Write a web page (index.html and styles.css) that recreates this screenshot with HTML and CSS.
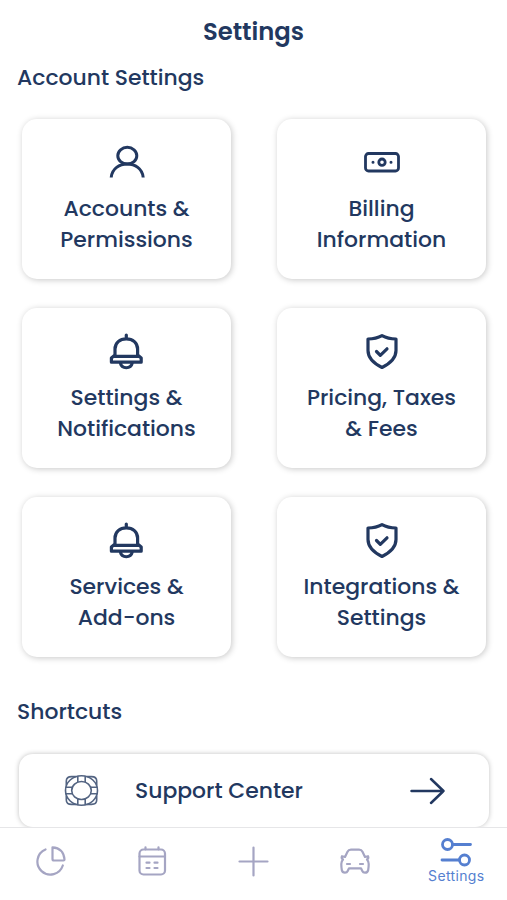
FILE: index.html
```html
<!DOCTYPE html>
<html lang="en">
<head>
<meta charset="utf-8">
<title>Settings</title>
<link rel="stylesheet" href="styles.css">
</head>
<body>
<div class="app">
  <main class="content">
    <h1 class="title">Settings</h1>
    <h2 class="heading">Account Settings</h2>
    <section class="cards">
      <a class="card">
        <svg class="icon person" viewBox="0 0 40 40"><ellipse cx="20.300" cy="13.700" rx="9.500" ry="8.400"/><path d="M4.200 35.500c1.500-18 30.500-18 32 0"/></svg>
        <span class="label">Accounts &amp;<br>Permissions</span>
      </a>
      <a class="card">
        <svg class="icon" viewBox="0 0 40 40"><rect x="3.500" y="11.500" width="33" height="17.500" rx="3"/><circle cx="20" cy="20.200" r="3.200"/><path class="dots" d="M11 20.200h.01M29 20.200h.01"/></svg>
        <span class="label">Billing<br>Information</span>
      </a>
      <a class="card">
        <svg class="icon bold" viewBox="0 0 40 40"><path d="M19.300 4v3.500M8 24v-6C8 12 12.800 7.800 19.300 7.800S30.600 12 30.600 18V24l3.600 3v4.200H4.400V27L8 24zM7.500 25.300h23.600M13.300 32c1.500 6.300 10.500 6.300 12 0"/></svg>
        <span class="label">Settings &amp;<br>Notifications</span>
      </a>
      <a class="card">
        <svg class="icon bold" viewBox="0 0 40 40"><path d="M20 4.700c4.500 2.500 9 3.300 14 3.300v11.500c0 8-6 13-14 17-8-4-14-9-14-17V8c5 0 9.500-.8 14-3.300z"/><path d="M14.500 20.500l3.800 3.800 6.700-6.500"/></svg>
        <span class="label">Pricing, Taxes<br>&amp; Fees</span>
      </a>
      <a class="card">
        <svg class="icon bold" viewBox="0 0 40 40"><path d="M19.300 4v3.500M8 24v-6C8 12 12.800 7.800 19.300 7.800S30.600 12 30.600 18V24l3.600 3v4.200H4.400V27L8 24zM7.500 25.300h23.600M13.300 32c1.500 6.300 10.500 6.300 12 0"/></svg>
        <span class="label">Services &amp;<br>Add-ons</span>
      </a>
      <a class="card">
        <svg class="icon bold" viewBox="0 0 40 40"><path d="M20 4.700c4.500 2.500 9 3.300 14 3.300v11.500c0 8-6 13-14 17-8-4-14-9-14-17V8c5 0 9.500-.8 14-3.300z"/><path d="M14.500 20.500l3.800 3.800 6.700-6.500"/></svg>
        <span class="label">Integrations &amp;<br>Settings</span>
      </a>
    </section>
    <h2 class="heading shortcuts">Shortcuts</h2>
    <a class="shortcut">
      <svg class="buoy" viewBox="0 0 36 34"><ellipse cx="17.500" cy="16.500" rx="16" ry="14.800"/><ellipse cx="17.500" cy="16.500" rx="9.800" ry="9"/><path d="M13.800 2.500v5.500M21.200 2.500v5.500M13.800 25v5.500M21.200 25v5.500M2 13.200h6.200M2 19.800h6.200M26.800 13.200h6.200M26.800 19.800h6.200M12 2.600H7.500Q2.300 2.600 2.300 7v4M23 2.600h4.500q5.200 0 5.200 4.400v4M12 30.400H7.500q-5.200 0-5.200-4.400v-4M23 30.400h4.500q5.200 0 5.200-4.400v-4"/></svg>
      <span>Support Center</span>
      <svg class="arrow" viewBox="0 0 36 28"><path d="M1.500 14h32M21 2l12.500 12L21 26"/></svg>
    </a>
  </main>
  <nav class="tabs">
    <a class="tab"><svg viewBox="0 0 32 32"><path d="M10.500 4.500A13 13 0 1 0 27.800 20.500"/><path d="M17.500 2.300Q28.500 3 29.500 14.500 29.500 15.500 28.500 15.500H19q-1.500 0-1.500-1.500z"/></svg></a>
    <a class="tab"><svg viewBox="0 0 32 32"><rect x="3.500" y="4.500" width="25.500" height="25" rx="4"/><path d="M3.500 11.500h25.500M9.500 2.300v2M22.500 2.300v2M10.500 17.700h3M18.500 17.700h3M10.500 23h3M18.500 23h3"/></svg></a>
    <a class="tab"><svg viewBox="0 0 32 32"><path d="M16.500 2.500v28M2.500 16.500h28"/></svg></a>
    <a class="tab"><svg viewBox="0 0 32 32"><path d="M6 12L8.500 6.800Q9.500 4.700 12 4.700h8q2.500 0 3.500 2.100L26 12l3-.8q1 1.800-1 3.300 1.700 2 1.700 4.500 0 3-.5 6-.5 2.700-3.200 2.700-2 0-2.700-1.700l-1.300-2.700H10l-1.300 2.700q-.7 1.700-2.700 1.700-2.700 0-3.200-2.700-.5-3-.5-6 0-2.500 1.700-4.500-2-1.500-1-3.300zM8 19h3M21 19h3"/></svg></a>
    <a class="tab active"><svg viewBox="0 0 32 32"><circle cx="7.500" cy="8.500" r="5"/><path d="M12.500 8.500h18M2 24h17.500"/><circle cx="24.500" cy="24" r="5"/></svg><span class="tab-label">Settings</span></a>
  </nav>
</div>
</body>
</html>
```

FILE: styles.css
```css
* { box-sizing: border-box; }
body {
  margin: 0;
  background: #fff;
  color: #223860;
  font-family: Poppins, Inter, sans-serif;
  font-weight: 500;
}
.app { height: 900px; display: flex; flex-direction: column; overflow: hidden; }
.content { height: 827px; flex: none; overflow: hidden; }
svg { fill: none; stroke: currentColor; stroke-linecap: round; stroke-linejoin: round; display: block; }
.title { margin: 0; padding-top: 14px; height: 61px; line-height: 36px; font-size: 24.300px; font-weight: 600; text-align: center; }
.heading { margin: 0; padding-left: 17px; line-height: 34px; font-size: 21.900px; font-weight: 500; }
.cards { display: grid; grid-template-columns: 209px 209px; grid-auto-rows: 160px; gap: 29px 46px; padding: 24px 0 0 22px; }
.card {
  display: flex; flex-direction: column; align-items: center;
  padding-top: 23px; border-radius: 15px; background: #fff;
  box-shadow: 1px 1px 6px rgba(0, 0, 0, .22);
}
.icon { width: 40px; height: 40px; stroke-width: 2.800; }
.icon.person { stroke-width: 3; stroke-linecap: butt; }
.icon.bold { stroke-width: 3.200; }
.dots { stroke-width: 3; }
.label { margin-top: 11px; font-size: 21.900px; line-height: 31px; text-align: center; white-space: nowrap; }
.shortcuts { margin-top: 38px; }
.shortcut {
  display: flex; align-items: center; margin: 25px 18px 0 19px; height: 73px; padding: 0 43px 0 45px;
  border-radius: 14px; box-shadow: 0 0 5px rgba(0, 0, 0, .25); font-size: 21.900px;
}
.buoy { width: 36px; height: 34px; stroke: #536482; stroke-width: 1.600; margin-right: 35px; }
.arrow { width: 36px; height: 28px; stroke-width: 2.500; margin-left: auto; }
.tabs { height: 73px; flex: none; display: grid; grid-template-columns: repeat(5, 101.400px); border-top: 1px solid #e6e6e8; background: #fff; color: #a5a5c3; }
.tab { display: flex; flex-direction: column; align-items: center; padding-top: 17px; }
.tab svg { width: 32px; height: 32px; stroke-width: 2.200; }
.tab.active { padding-top: 8px; color: #557fd0; font-family: Inter, sans-serif; font-size: 14px; line-height: 17px; font-weight: 400; letter-spacing: .35px; }
.tab.active svg { stroke-width: 2.800; }
.tab-label { margin-top: -1px; }
```
